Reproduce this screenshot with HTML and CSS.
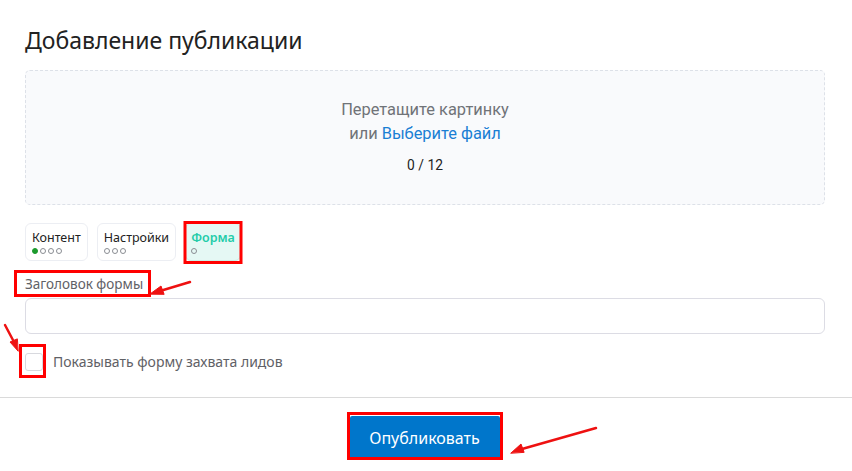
FILE: index.html
```html
<!DOCTYPE html>
<html lang="ru">
<head>
<meta charset="utf-8">
<title>Добавление публикации</title>
<link rel="stylesheet" href="styles.css">
</head>
<body>
<div class="modal">
  <div class="content">
    <h1 class="title">Добавление публикации</h1>
    <div class="dropzone">
      <div class="dz-line">Перетащите картинку</div>
      <div class="dz-line">или <a class="dz-link" href="#">Выберите файл</a></div>
      <div class="dz-count">0 / 12</div>
    </div>
    <div class="tabs">
      <div class="tab">
        <div class="tab-name">Контент</div>
        <div class="dots"><span class="dot filled"></span><span class="dot"></span><span class="dot"></span><span class="dot"></span></div>
      </div>
      <div class="tab">
        <div class="tab-name">Настройки</div>
        <div class="dots"><span class="dot"></span><span class="dot"></span><span class="dot"></span></div>
      </div>
      <div class="tab active">
        <div class="tab-name">Форма</div>
        <div class="dots"><span class="dot"></span></div>
      </div>
    </div>
    <label class="field-label">Заголовок формы</label>
    <div class="input"></div>
    <div class="check-row">
      <span class="checkbox"></span>
      <span class="check-label">Показывать форму захвата лидов</span>
    </div>
  </div>
  <div class="footer">
    <button class="publish">Опубликовать</button>
  </div>
</div>
<svg class="annotations" width="852" height="471" viewBox="0 0 852 471">
  <g fill="none" stroke="#ff0000" stroke-width="3">
    <rect x="185" y="222.5" width="56" height="40"/>
    <rect x="15.5" y="271.5" width="134" height="24"/>
    <rect x="20.5" y="345.5" width="24" height="31"/>
    <rect x="348.5" y="413.5" width="153" height="45"/>
  </g>
  <g stroke="#ee1111" stroke-width="2.5" fill="#ee1111" stroke-linecap="round">
    <line x1="190" y1="282" x2="160" y2="291"/>
    <polygon points="150,294 161,286 164,294" stroke-width="1"/>
    <line x1="5" y1="325" x2="14" y2="342"/>
    <polygon points="18,351 10,342 17,339" stroke-width="1"/>
    <line x1="596" y1="428" x2="522" y2="449"/>
    <polygon points="511,453 521,444 524,452" stroke-width="1"/>
  </g>
</svg>
</body>
</html>
```
FILE: styles.css
```css
html, body {
  margin: 0;
  padding: 0;
  background: #ffffff;
}
body {
  font-family: "Noto Sans", "Open Sans", sans-serif;
  color: #222;
  width: 852px;
  height: 471px;
  overflow: hidden;
  position: relative;
}
.content {
  padding: 0 27px 0 25px;
}
.title {
  margin: 0;
  padding-top: 25px;
  font-size: 23px;
  line-height: 30px;
  font-weight: 400;
  color: #222;
}
.dropzone {
  margin-top: 15px;
  background: #f9fafc;
  border: 1px dashed #dde1e8;
  border-radius: 5px;
  display: flex;
  flex-direction: column;
  align-items: center;
  padding-top: 27px;
  box-sizing: border-box;
  height: 135px;
  font-family: "Roboto", "Noto Sans", sans-serif;
}
.dz-line {
  font-size: 16.4px;
  line-height: 24px;
  color: #707378;
}
.dz-link {
  color: #1a7fd4;
  text-decoration: none;
}
.dz-count {
  margin-top: 9px;
  font-size: 13.8px;
  line-height: 20px;
  color: #222;
}
.tabs {
  display: flex;
  gap: 9px;
  margin-top: 18px;
}
.tab {
  height: 38px;
  box-sizing: border-box;
  border: 1px solid #eceef3;
  border-radius: 6px;
  padding: 5px 6px 0 6px;
  background: #fff;
}
.tab.active {
  background: #e5f8f4;
  border-color: #c9efe6;
  padding: 5px 5px 0 5px;
}
.tab-name {
  font-size: 12.5px;
  line-height: 17px;
  font-weight: 400;
  color: #222;
}
.tab.active .tab-name {
  color: #23cca9;
  font-weight: 600;
}
.dots {
  display: flex;
  gap: 2px;
  margin-top: 2px;
}
.dot {
  width: 6px;
  height: 6px;
  border: 1px solid #8a8d93;
  border-radius: 50%;
  box-sizing: border-box;
}
.dot.filled {
  background: #1c9a2d;
  border-color: #1c9a2d;
}
.field-label {
  display: block;
  margin-top: 14px;
  font-size: 13.5px;
  line-height: 18px;
  color: #5f6166;
}
.input {
  margin-top: 5px;
  height: 36px;
  border: 1px solid #dcdce4;
  border-radius: 6px;
  box-sizing: border-box;
}
.check-row {
  display: flex;
  align-items: center;
  gap: 10px;
  margin-top: 18px;
}
.checkbox {
  width: 18px;
  height: 18px;
  border: 1px solid #d8d9de;
  border-radius: 3px;
  box-sizing: border-box;
}
.check-label {
  font-size: 14px;
  color: #5f6166;
}
.footer {
  margin-top: 26px;
  border-top: 1px solid #dadada;
  display: flex;
  justify-content: center;
  padding-top: 18px;
  padding-right: 3px;
}
.publish {
  width: 150px;
  height: 43px;
  background: #0076cb;
  color: #fff;
  border: none;
  border-radius: 2px;
  font-family: "Noto Sans", "Open Sans", sans-serif;
  font-size: 16px;
}
.annotations {
  position: absolute;
  left: 0;
  top: 0;
  pointer-events: none;
}
```
